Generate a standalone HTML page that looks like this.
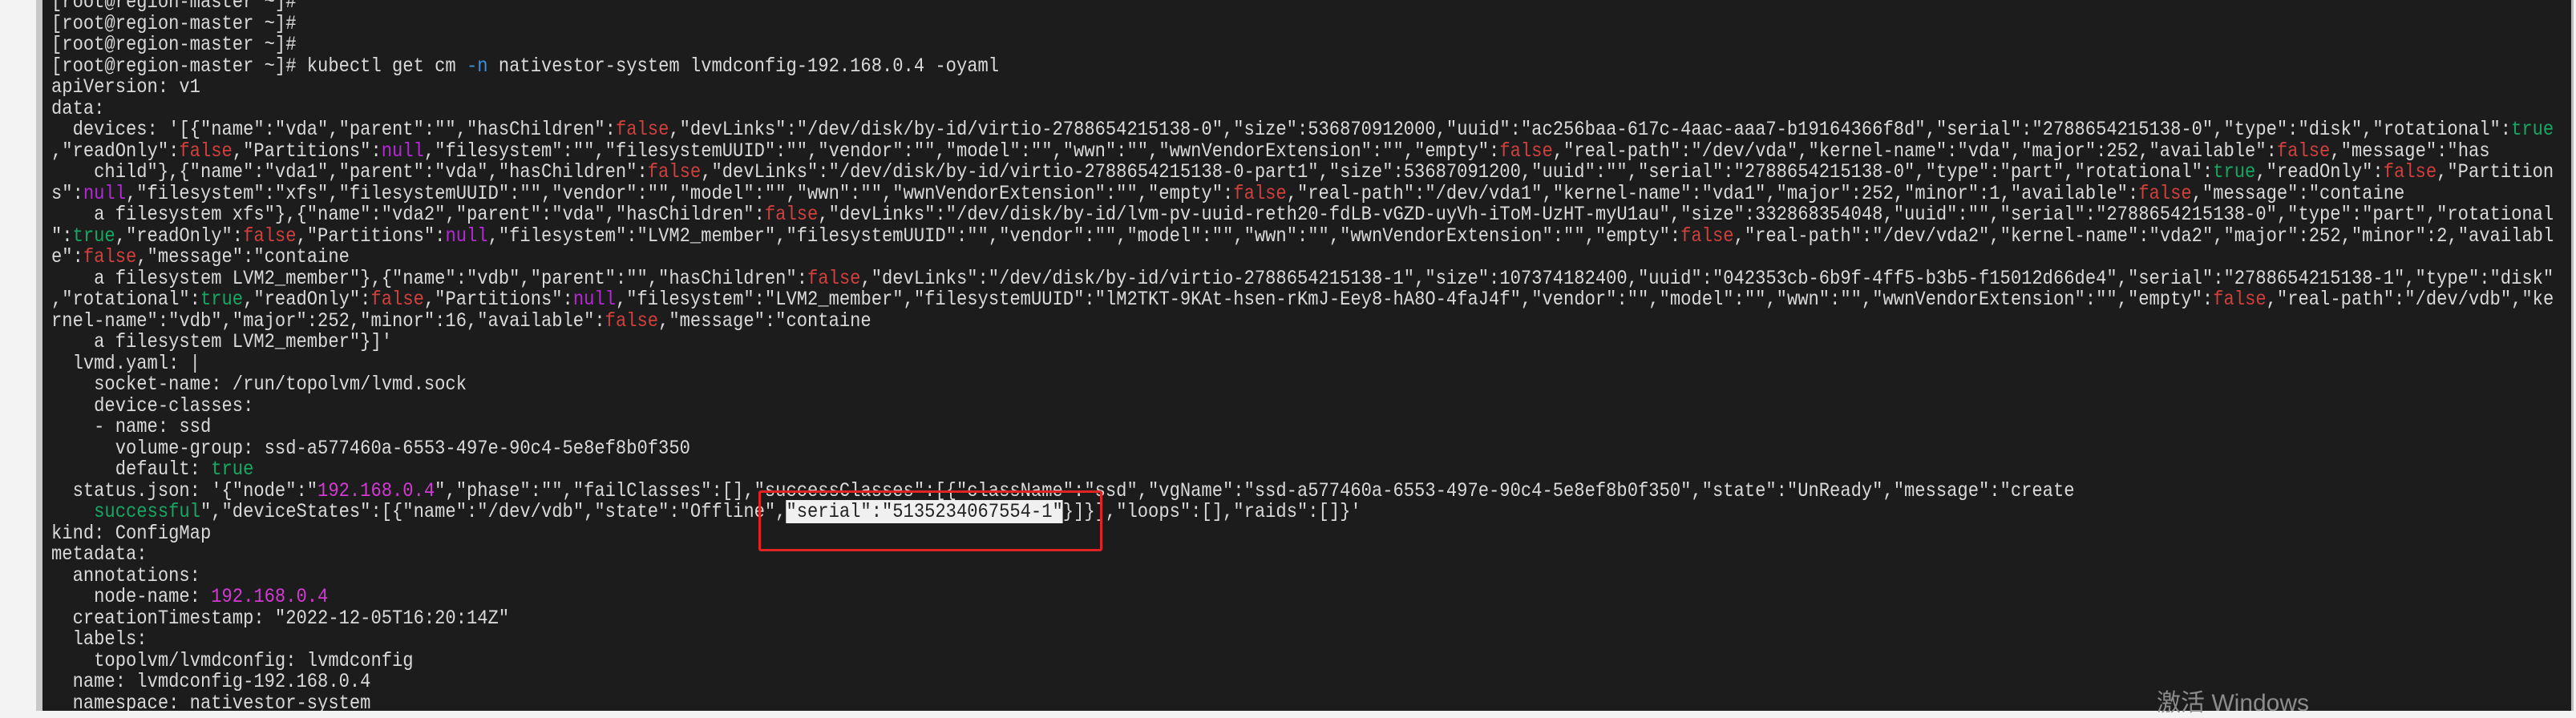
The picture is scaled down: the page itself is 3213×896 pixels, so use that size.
<!DOCTYPE html>
<html><head><meta charset="utf-8"><style>
html,body{margin:0;padding:0;width:3213px;height:887px;overflow:hidden;background:#f3f3f3;}
#term{position:absolute;left:53px;top:0;width:3154px;height:887px;background:#1c1c1d;overflow:hidden;}
#lb{position:absolute;left:45px;top:0;width:8px;height:887px;background:#c8c8c8;}
#rb{position:absolute;left:3207px;top:0;width:3px;height:887px;background:#bcbcbc;}
pre{position:absolute;left:11px;top:-10px;margin:0;font-family:"Liberation Mono",monospace;font-size:25px;letter-spacing:0;line-height:26.5px;color:#dadada;white-space:pre;transform:scaleX(0.8853);transform-origin:0 0;}
.f{color:#d0403c}.n{color:#b528d6}.t{color:#16a862}.m{color:#d23ad2}.b{color:#3a8fd8}
.sel{background:#f0f0f0;color:#222;}
#box{position:absolute;left:946px;top:612px;width:423px;height:70px;border:3px solid #e02424;border-radius:3px;}
#wm{position:absolute;left:2690px;top:852px;font-family:"Liberation Sans","Noto Sans CJK SC",sans-serif;font-size:30px;color:#8c8c8c;}
</style></head><body>
<div id="lb"></div>
<div id="term">
<pre>[root@region-master ~]#
[root@region-master ~]#
[root@region-master ~]#
[root@region-master ~]# kubectl get cm <span class="b">-n</span> nativestor-system lvmdconfig-192.168.0.4 -oyaml
apiVersion: v1
data:
  devices: '[{"name":"vda","parent":"","hasChildren":<span class="f">false</span>,"devLinks":"/dev/disk/by-id/virtio-2788654215138-0","size":536870912000,"uuid":"ac256baa-617c-4aac-aaa7-b19164366f8d","serial":"2788654215138-0","type":"disk","rotational":<span class="t">true</span>
,"readOnly":<span class="f">false</span>,"Partitions":<span class="n">null</span>,"filesystem":"","filesystemUUID":"","vendor":"","model":"","wwn":"","wwnVendorExtension":"","empty":<span class="f">false</span>,"real-path":"/dev/vda","kernel-name":"vda","major":252,"available":<span class="f">false</span>,"message":"has
    child"},{"name":"vda1","parent":"vda","hasChildren":<span class="f">false</span>,"devLinks":"/dev/disk/by-id/virtio-2788654215138-0-part1","size":53687091200,"uuid":"","serial":"2788654215138-0","type":"part","rotational":<span class="t">true</span>,"readOnly":<span class="f">false</span>,"Partition
s":<span class="n">null</span>,"filesystem":"xfs","filesystemUUID":"","vendor":"","model":"","wwn":"","wwnVendorExtension":"","empty":<span class="f">false</span>,"real-path":"/dev/vda1","kernel-name":"vda1","major":252,"minor":1,"available":<span class="f">false</span>,"message":"containe
    a filesystem xfs"},{"name":"vda2","parent":"vda","hasChildren":<span class="f">false</span>,"devLinks":"/dev/disk/by-id/lvm-pv-uuid-reth20-fdLB-vGZD-uyVh-iToM-UzHT-myU1au","size":332868354048,"uuid":"","serial":"2788654215138-0","type":"part","rotational
":<span class="t">true</span>,"readOnly":<span class="f">false</span>,"Partitions":<span class="n">null</span>,"filesystem":"LVM2_member","filesystemUUID":"","vendor":"","model":"","wwn":"","wwnVendorExtension":"","empty":<span class="f">false</span>,"real-path":"/dev/vda2","kernel-name":"vda2","major":252,"minor":2,"availabl
e":<span class="f">false</span>,"message":"containe
    a filesystem LVM2_member"},{"name":"vdb","parent":"","hasChildren":<span class="f">false</span>,"devLinks":"/dev/disk/by-id/virtio-2788654215138-1","size":107374182400,"uuid":"042353cb-6b9f-4ff5-b3b5-f15012d66de4","serial":"2788654215138-1","type":"disk"
,"rotational":<span class="t">true</span>,"readOnly":<span class="f">false</span>,"Partitions":<span class="n">null</span>,"filesystem":"LVM2_member","filesystemUUID":"lM2TKT-9KAt-hsen-rKmJ-Eey8-hA8O-4faJ4f","vendor":"","model":"","wwn":"","wwnVendorExtension":"","empty":<span class="f">false</span>,"real-path":"/dev/vdb","ke
rnel-name":"vdb","major":252,"minor":16,"available":<span class="f">false</span>,"message":"containe
    a filesystem LVM2_member"}]'
  lvmd.yaml: |
    socket-name: /run/topolvm/lvmd.sock
    device-classes:
    - name: ssd
      volume-group: ssd-a577460a-6553-497e-90c4-5e8ef8b0f350
      default: <span class="t">true</span>
  status.json: '{"node":"<span class="m">192.168.0.4</span>","phase":"","failClasses":[],"successClasses":[{"className":"ssd","vgName":"ssd-a577460a-6553-497e-90c4-5e8ef8b0f350","state":"UnReady","message":"create
    <span class="t">successful</span>","deviceStates":[{"name":"/dev/vdb","state":"Offline",<span class="sel">"serial":"5135234067554-1"</span>}]}],"loops":[],"raids":[]}'
kind: ConfigMap
metadata:
  annotations:
    node-name: <span class="m">192.168.0.4</span>
  creationTimestamp: "2022-12-05T16:20:14Z"
  labels:
    topolvm/lvmdconfig: lvmdconfig
  name: lvmdconfig-192.168.0.4
  namespace: nativestor-system</pre>
</div>
<div id="rb"></div>
<div id="box"></div>
<div id="wm">激活 Windows</div>
</body></html>
